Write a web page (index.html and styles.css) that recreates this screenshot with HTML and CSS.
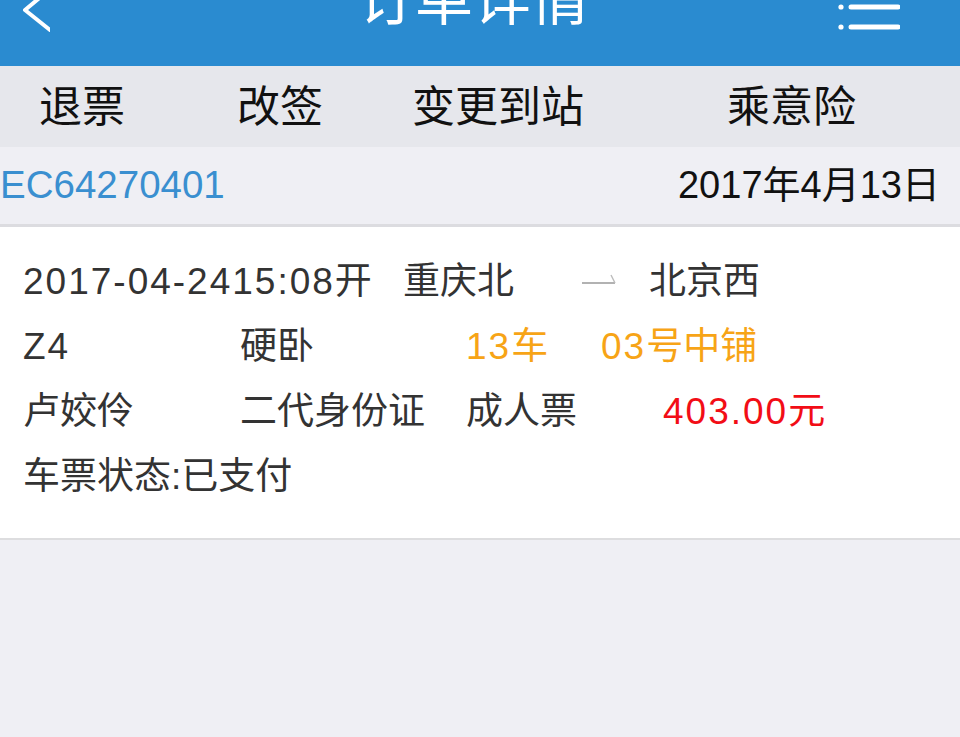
FILE: index.html
```html
<!DOCTYPE html>
<html lang="zh-CN">
<head>
<meta charset="utf-8">
<title>订单详情</title>
<link rel="stylesheet" href="styles.css">
</head>
<body>
<header class="topbar">
  <div class="back">
    <svg width="40" height="40" viewBox="0 0 40 40"><polyline points="39,-10 15,10 40,30" fill="none" stroke="#fff" stroke-width="4" stroke-linecap="round" stroke-linejoin="round"/></svg>
  </div>
  <h1 class="title">订单详情</h1>
  <div class="menu">
    <svg width="70" height="40" viewBox="0 0 70 40"><circle cx="11" cy="7" r="2.6" fill="#fff"/><circle cx="11" cy="27" r="2.6" fill="#fff"/><line x1="21" y1="7" x2="68" y2="7" stroke="#fff" stroke-width="5" stroke-linecap="round"/><line x1="21" y1="27" x2="68" y2="27" stroke="#fff" stroke-width="5" stroke-linecap="round"/></svg>
  </div>
</header>
<nav class="tabs">
  <span class="tab t1">退票</span>
  <span class="tab t2">改签</span>
  <span class="tab t3">变更到站</span>
  <span class="tab t4">乘意险</span>
</nav>
<div class="orderbar">
  <span class="orderno">EC64270401</span>
  <span class="orderdate"><span class="n">2017</span>年<span class="n">4</span>月<span class="n">13</span>日</span>
</div>
<section class="card">
  <div class="row">
    <span class="c-dt"><span class="n">2017-04-2415:08</span>开</span>
    <span class="c-from">重庆北</span>
    <span class="c-arrow"><svg width="36" height="14" viewBox="0 0 36 14"><line x1="1" y1="11" x2="34" y2="11" stroke="#999" stroke-width="1.6"/><line x1="34" y1="11" x2="30" y2="3" stroke="#bbb" stroke-width="1.4"/></svg></span>
    <span class="c-to">北京西</span>
  </div>
  <div class="row">
    <span class="c1"><span class="n">Z4</span></span>
    <span class="c2">硬卧</span>
    <span class="c3 orange"><span class="n">13</span>车</span>
    <span class="c4 orange"><span class="n">03</span>号中铺</span>
  </div>
  <div class="row">
    <span class="c1">卢姣伶</span>
    <span class="c2">二代身份证</span>
    <span class="c3">成人票</span>
    <span class="c4b red"><span class="n">403.00</span>元</span>
  </div>
  <div class="row">
    <span class="c1">车票状态:已支付</span>
  </div>
</section>
</body>
</html>
```
FILE: styles.css
```css
html, body {
  margin: 0;
  padding: 0;
}
body {
  width: 960px;
  height: 737px;
  overflow: hidden;
  background: #efeff4;
  font-family: "Liberation Sans", "Noto Sans CJK SC", sans-serif;
  color: #333;
}
.topbar {
  height: 66px;
  background: #2a8bd0;
  display: flex;
  align-items: flex-start;
  overflow: hidden;
}
.back {
  width: 40px;
  height: 40px;
  margin-left: 10px;
}
.back svg { display: block; }
.title {
  flex: 1;
  margin: -34px 0 0 0;
  padding-left: 66px;
  font-family: "Noto Sans CJK SC", sans-serif;
  font-size: 58px;
  line-height: 58px;
  font-weight: 400;
  color: #fff;
  text-align: center;
}
.menu {
  width: 70px;
  height: 40px;
  margin-right: 60px;
}
.menu svg { display: block; }
.tabs {
  height: 81px;
  background: #e6e7ec;
  display: flex;
  align-items: center;
  padding-left: 39px;
  font-family: "Noto Sans CJK SC", sans-serif;
  font-size: 43px;
  color: #111;
}
.tab { display: block; line-height: 81px; margin-top: -6px; }
.t1 { width: 198px; }
.t2 { width: 175px; }
.t3 { width: 315px; }
.orderbar {
  height: 77px;
  line-height: 76px;
  display: flex;
  align-items: baseline;
  justify-content: space-between;
  padding: 0 20px 0 0;
  border-bottom: 3px solid #dcdce0;
  font-size: 38px;
}
.orderno {
  color: #3a8fd0;
  font-size: 38.5px;
}
.orderdate { color: #111; }
.card {
  background: #fff;
  border-bottom: 2px solid #dddddf;
  padding: 22px 0 29px 23px;
  font-size: 37px;
  color: #333;
}
.n { letter-spacing: 2px; }
.orderdate .n { letter-spacing: 0; }
.row {
  display: flex;
  align-items: baseline;
  height: 65px;
  line-height: 65px;
  white-space: nowrap;
}
.c-dt { width: 380px; }
.c-from { width: 178px; }
.c-arrow { width: 68px; align-self: center; display: flex; align-items: center; }
.c-arrow svg { display: block; margin-top: -6px; }
.c1 { width: 217px; }
.c2 { width: 226px; }
.c3 { width: 135px; }
.c4b { margin-left: 62px; }
.orange { color: #f7a416; }
.red { color: #f20d16; }
```
